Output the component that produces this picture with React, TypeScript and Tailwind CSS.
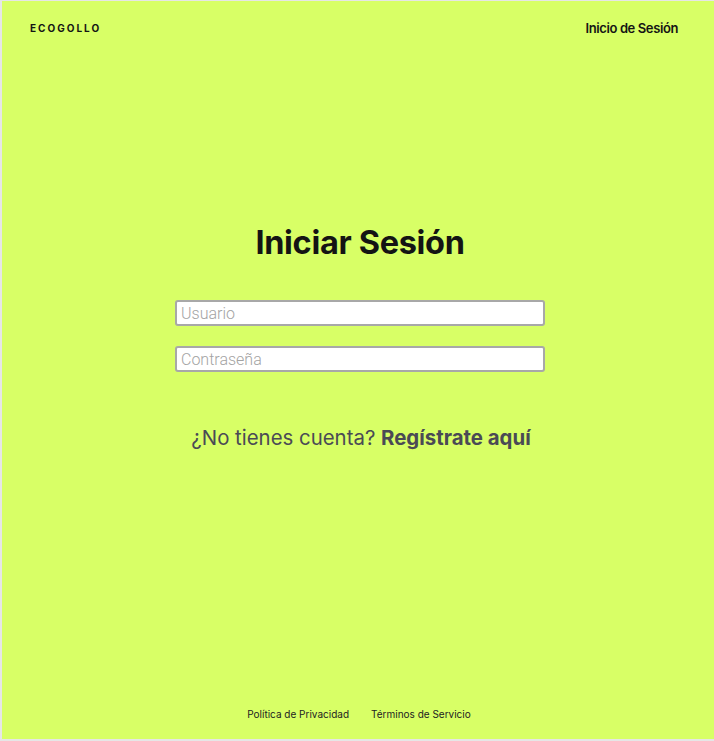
export default function App() {
	return (
		<div className="h-[741px] w-full bg-[#e6e6e6] pl-[2px] pt-[1px] pb-[2px]">
			<div className="flex h-full flex-col bg-[#d8ff66] font-['Inter',sans-serif] text-[#141414]">
				<header className="flex h-[55px] items-center justify-between pl-[28px] pr-[36px]">
					<span className="text-[10px] font-bold tracking-[0.2em]">ECOGOLLO</span>
					<span className="text-[13px] font-semibold tracking-[-0.03em]">Inicio de Sesión</span>
				</header>

				<main className="flex flex-1 flex-col items-center pl-[4px] pt-[167px]">
					<h1 className="text-[32.5px] font-bold leading-[40px] tracking-[-0.01em]">Iniciar Sesión</h1>
					<form className="mt-[37px] flex w-[370px] flex-col gap-[20px] font-['Roboto',sans-serif]">
						<input
							type="text"
							placeholder="Usuario"
							className="h-[26px] w-full rounded-[3px] border-2 border-[#a8a8a8] bg-white px-[4px] text-[16px] font-light text-[#333] placeholder:text-[#a3a3a3] outline-none"
						/>
						<input
							type="password"
							placeholder="Contraseña"
							className="h-[26px] w-full rounded-[3px] border-2 border-[#a8a8a8] bg-white px-[4px] text-[16px] font-light text-[#333] placeholder:text-[#a3a3a3] outline-none"
						/>
					</form>
					<p className="mt-[51px] pl-[2px] text-[20.4px] text-[#4a4a55]">
						¿No tienes cuenta? <a href="#" className="font-bold">Regístrate aquí</a>
					</p>
				</main>

				<footer className="flex h-[41px] justify-center gap-[22px] pl-[2px] pt-[9px] text-[10px] text-[#222]">
					<a href="#">Política de Privacidad</a>
					<a href="#">Términos de Servicio</a>
				</footer>
			</div>
		</div>
	);
}
